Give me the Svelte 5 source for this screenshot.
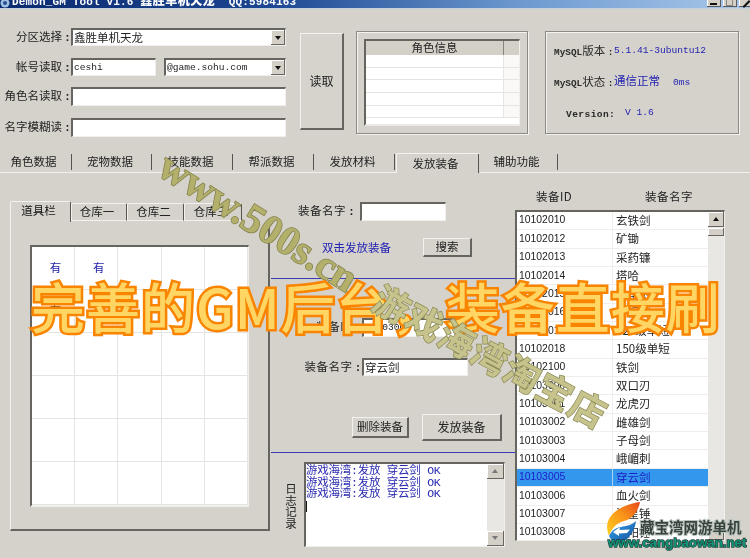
<script lang="ts">
  const tabs = [
    { label: '角色数据', width: 73 },
    { label: '宠物数据', width: 80 },
    { label: '技能数据', width: 81 },
    { label: '帮派数据', width: 81 },
    { label: '发放材料', width: 81 },
    { label: '发放装备', width: 84, active: true },
    { label: '辅助功能', width: 79 },
  ];

  const bagTabs = [
    { label: '道具栏', width: 61, active: true },
    { label: '仓库一', width: 56 },
    { label: '仓库二', width: 57 },
    { label: '仓库三', width: 58 },
  ];

  const cells = Array.from({ length: 30 }, (_, i) => {
    if (i === 0 || i === 1) return { text: '有', dark: false };
    if (i === 5) return { text: '有', dark: true };
    return { text: '', dark: false };
  });

  const items = [
    ['10102010', '玄铁剑'],
    ['10102012', '矿锄'],
    ['10102013', '采药镰'],
    ['10102014', '塔哈'],
    ['10102015', '七星剑'],
    ['10102016', '青铜剑'],
    ['10102017', '120级单短'],
    ['10102018', '150级单短'],
    ['10102100', '铁剑'],
    ['10103000', '双口刃'],
    ['10103001', '龙虎刃'],
    ['10103002', '雌雄剑'],
    ['10103003', '子母剑'],
    ['10103004', '峨嵋刺'],
    ['10103005', '穿云剑'],
    ['10103006', '血火剑'],
    ['10103007', '流星锤'],
    ['10103008', '朝阳锤'],
  ];

  const logLines = [0, 1, 2];
</script>

<div class="window">
  <header class="titlebar">
    <svg class="app-icon" viewBox="0 0 10 10" width="10" height="10">
      <circle cx="5" cy="5" r="4.5" fill="#9fc0e0" />
      <circle cx="5" cy="5" r="2" fill="#24508f" />
    </svg>
    <span class="title">Demon_GM Tool V1.6 <b>鑫胜单机天龙</b> &nbsp;QQ:5984163</span>
    <div class="win-buttons">
      <span class="win-btn"><i class="min"></i></span>
      <span class="win-btn"><i class="max"></i></span>
      <span class="win-btn"><i class="close"></i></span>
    </div>
  </header>

  <section class="top">
    <div class="account">
      <label class="row row-18">
        <span class="label">分区选择<em>:</em></span>
        <div class="sunken select wide"><span class="value cjk">鑫胜单机天龙</span><span class="drop"></span></div>
      </label>
      <div class="row row-18">
        <span class="label">帐号读取<em>:</em></span>
        <div class="pair">
          <div class="sunken user"><span class="value mono">ceshi</span></div>
          <div class="sunken select domain"><span class="value mono">@game.sohu.com</span><span class="drop"></span></div>
        </div>
      </div>
      <label class="row row-19">
        <span class="label">角色名读取<em>:</em></span>
        <div class="sunken wide"></div>
      </label>
      <label class="row row-19">
        <span class="label">名字模糊读<em>:</em></span>
        <div class="sunken wide"></div>
      </label>
    </div>

    <button class="raised read">读取</button>

    <div class="group role-info">
      <div class="role-list">
        <div class="role-head"><span>角色信息</span><span></span></div>
        {#each [0, 1, 2, 3, 4] as r (r)}
          <div class="role-row"><span></span><span></span></div>
        {/each}
      </div>
    </div>

    <div class="group status">
      <p class="line"><span class="key"><u>MySQL</u>版本 <u>:</u></span><span class="val">5.1.41-3ubuntu12</span></p>
      <p class="line"><span class="key"><u>MySQL</u>状态 <u>:</u></span><span class="val">通信正常<span class="ms">0ms</span></span></p>
      <p class="line version"><span class="key"><u>Version:</u></span><span class="val">V 1.6</span></p>
    </div>
  </section>

  <nav class="tabs">
    {#each tabs as tab (tab.label)}
      <div class="tab" class:active={tab.active} style:width="{tab.width}px">{tab.label}</div>
    {/each}
  </nav>

  <main class="page">
    <section class="bag">
      <div class="bag-tabs">
        {#each bagTabs as tab (tab.label)}
          <div class="bag-tab" class:active={tab.active} style:width="{tab.width}px">{tab.label}</div>
        {/each}
      </div>
      <div class="bag-body">
        <div class="slots">
          {#each cells as cell, i (i)}
            <div class="slot" class:dark={cell.dark}>{cell.text}</div>
          {/each}
        </div>
      </div>
    </section>

    <section class="editor">
      <div class="name-search">
        <span class="field-label">装备名字<em>:</em></span>
        <div class="sunken search-input"></div>
      </div>
      <div class="search-row">
        <span class="hint">双击发放装备</span>
        <button class="raised search">搜索</button>
      </div>
      <div class="divider first"></div>
      <div class="edit-row id-row">
        <span class="field-label">装备ID<em>:</em></span>
        <div class="sunken id-input"><span class="value mono">10103005</span></div>
      </div>
      <div class="edit-row name-row">
        <span class="field-label">装备名字<em>:</em></span>
        <div class="sunken name-input"><span class="value cjk">穿云剑</span></div>
      </div>
      <div class="actions">
        <button class="raised del">删除装备</button>
        <button class="raised send">发放装备</button>
      </div>
      <div class="divider second"></div>
      <div class="log">
        <span class="log-label">日志记录</span>
        <div class="sunken log-box">
          <div class="log-text">
            {#each logLines as l (l)}
              <div class="log-line">游戏海湾:发放 穿云剑 OK</div>
            {/each}
            <i class="caret"></i>
          </div>
          <div class="scrollbar">
            <span class="arrow up"></span>
            <span class="arrow down"></span>
          </div>
        </div>
      </div>
    </section>

    <section class="items">
      <div class="items-head"><span>装备ID</span><span>装备名字</span></div>
      <div class="item-list">
        <div class="item-rows">
          {#each items as [id, name] (id)}
            <div class="item" class:selected={id === '10103005'}>
              <span class="item-id">{id}</span>
              <span class="item-name">{name}</span>
            </div>
          {/each}
        </div>
        <div class="scrollbar list-bar">
          <span class="arrow up"></span>
          <span class="thumb"></span>
          <span class="arrow down"></span>
        </div>
      </div>
    </section>
  </main>

  <div class="mark-site">www.500s.cn</div>
  <div class="slogan">完善的GM后台&#65292;装备直接刷</div>
  <div class="mark-shop">游戏海湾淘宝店</div>

  <div class="brand">
    <svg class="brand-logo" viewBox="0 0 36 44" width="36" height="44">
      <defs>
        <linearGradient id="flame" x1="0" y1="1" x2="1" y2="0">
          <stop offset="0" stop-color="#ffd21c" />
          <stop offset="0.55" stop-color="#f9931a" />
          <stop offset="1" stop-color="#e8481a" />
        </linearGradient>
        <linearGradient id="swirl" x1="0" y1="0" x2="1" y2="1">
          <stop offset="0" stop-color="#37a6ea" />
          <stop offset="1" stop-color="#124e9f" />
        </linearGradient>
      </defs>
      <path d="M34 1C25 2 9 7 3 18C0 24 1 30 3 35C5 28 10 22 18 20C26 18 32 11 34 1Z" fill="url(#flame)" />
      <path d="M3 35C6 42 15 44 21 38C25 34 29 28 30 20C26 24 20 25 15 26C9 27 5 30 3 35Z" fill="url(#swirl)" />
      <path d="M7 31L14 26L13.500 29L24 28.500L21 32L13 32.500L13 35Z" fill="#fff" />
    </svg>
    <div class="brand-name">藏宝湾网游单机</div>
    <div class="brand-url">www.cangbaowan.net</div>
  </div>
</div>

<style>
  :global(body) {
    margin: 0;
    background: #d4d0c8;
  }

  .window {
    position: relative;
    width: 750px;
    height: 558px;
    overflow: hidden;
    background: #d5d2cc;
    color: #222;
    font-family: "Noto Sans CJK SC", sans-serif;
    font-size: 11.5px;
    line-height: 1;
    /* the source is a soft jpeg */
    filter: blur(0.3px);
  }

  em {
    font-style: normal;
    font-family: "Liberation Mono", monospace;
    font-weight: 700;
    margin-left: 2px;
  }

  /* title bar, only its lower part is in the shot */
  .titlebar {
    height: 9px;
    display: flex;
    align-items: flex-end;
    overflow: hidden;
    background: linear-gradient(90deg, #0b2a70 0%, #1b4590 35%, #6e9ad0 70%, #a9c8ea 100%);
    border-bottom: 1px solid #c4d2dc;
    box-sizing: border-box;
  }

  .app-icon {
    flex: none;
    margin: 0 2px 0 0;
  }

  .title {
    flex: none;
    height: 14px;
    margin-bottom: -1px;
    color: #fff;
    font-family: "Liberation Mono", "Noto Sans CJK SC", monospace;
    font-size: 11px;
    font-weight: 700;
    line-height: 14px;
    letter-spacing: 0.15px;
    white-space: pre;
  }

  .title b {
    letter-spacing: 0.5px;
    font-size: 12px;
  }

  .win-buttons {
    display: flex;
    gap: 2px;
    margin-left: auto;
    margin-right: -3px;
    margin-bottom: 1px;
  }

  .win-btn {
    position: relative;
    width: 14px;
    height: 12px;
    background: #d4d0c8;
    box-shadow: inset -1px -1px 0 #5b5a56, inset 1px 1px 0 #fff;
  }

  .win-btn i {
    position: absolute;
    display: block;
  }

  .win-btn .min {
    left: 3px;
    bottom: 2px;
    width: 7px;
    height: 2px;
    background: #111;
  }

  .win-btn .max {
    left: 3px;
    bottom: 1px;
    width: 7px;
    height: 7px;
    border: 1px solid #8a8a86;
    box-sizing: border-box;
  }

  .win-btn .close {
    left: 3px;
    bottom: 2px;
    width: 9px;
    height: 2px;
    background: #111;
    transform: rotate(-45deg);
  }

  /* sunken and raised edges */
  .sunken {
    box-sizing: border-box;
    background: #fff;
    border-style: solid;
    border-width: 2px 1px 1px 2px;
    border-color: #66645f #f0efec #f0efec #66645f;
    display: flex;
    align-items: center;
    overflow: hidden;
    min-width: 0;
  }

  .raised {
    box-sizing: border-box;
    padding: 0;
    background: #d6d3cd;
    color: #222;
    font: inherit;
    border-style: solid;
    border-width: 1px 2px 2px 1px;
    border-color: #f2f1ee #66645f #66645f #f2f1ee;
  }

  .value {
    padding-left: 1px;
    white-space: nowrap;
    color: #222;
  }

  .mono {
    font-family: "Liberation Mono", monospace;
    font-size: 9.6px;
  }

  .cjk {
    font-size: 11.5px;
  }

  /* top strip */
  .top {
    height: 144px;
    display: flex;
    align-items: flex-start;
    box-sizing: border-box;
  }

  .account {
    flex: none;
    width: 286px;
    padding-top: 19px;
    display: flex;
    flex-direction: column;
    gap: 12px;
  }

  .row {
    display: flex;
    align-items: center;
  }

  .row-18 {
    height: 18px;
  }

  .row-19 {
    height: 19px;
    margin-top: -1px;
  }

  .row-19:last-child {
    margin-top: 0;
  }

  .label {
    flex: none;
    width: 71px;
    text-align: right;
    white-space: nowrap;
  }

  .wide {
    width: 215px;
    height: 100%;
  }

  .select {
    position: relative;
  }

  .drop {
    position: absolute;
    right: 0;
    top: 0;
    bottom: 0;
    width: 14px;
    background: #d4d0c8;
    box-shadow: inset -1px -1px 0 #66645f, inset 1px 1px 0 #fff;
  }

  .drop::after {
    content: '';
    position: absolute;
    left: 4px;
    top: 6px;
    border: 3px solid transparent;
    border-top: 4px solid #111;
    border-bottom: 0;
  }

  .pair {
    display: flex;
    gap: 8px;
    height: 18px;
  }

  .user {
    width: 85px;
  }

  .domain {
    width: 122px;
  }

  .read {
    flex: none;
    width: 44px;
    height: 97px;
    margin: 24px 0 0 14px;
    font-size: 12px;
  }

  .group {
    box-sizing: border-box;
    flex: none;
    border: 1px solid #8b8a86;
    box-shadow: 1px 1px 0 #f4f3f0, inset 1px 1px 0 #f4f3f0;
  }

  .role-info {
    width: 172px;
    height: 103px;
    margin: 22px 0 0 12px;
    padding: 7px;
  }

  .role-list {
    box-sizing: border-box;
    height: 87px;
    background: #fff;
    border-style: solid;
    border-width: 2px 1px 2px 2px;
    border-color: #66645f #f0efec #eceae6 #66645f;
    overflow: hidden;
  }

  .role-head,
  .role-row {
    display: grid;
    grid-template-columns: 138px 1fr;
  }

  .role-head {
    height: 14px;
    background: #d4d0c8;
    font-size: 11.5px;
    text-align: center;
    line-height: 13px;
  }

  .role-head span:first-child {
    border-right: 1px solid #85847f;
  }

  .role-row {
    height: 12.7px;
    border-bottom: 1px solid #e6e4e0;
    box-sizing: border-box;
  }

  .role-row span:first-child {
    border-right: 1px solid #e6e4e0;
  }

  .role-row span:last-child {
    background: #faf9f7;
  }

  .status {
    width: 194px;
    height: 103px;
    margin: 22px 0 0 17px;
    padding: 13px 0 0 8px;
    font-size: 11.5px;
  }

  .line {
    margin: 0 0 19px;
    height: 12px;
    display: flex;
    align-items: center;
    white-space: nowrap;
  }

  .key {
    width: 60px;
    flex: none;
    color: #2b2a28;
  }

  .key u {
    text-decoration: none;
    font-family: "Liberation Mono", monospace;
    font-size: 9.4px;
    font-weight: 700;
  }

  .val {
    color: #2424b0;
    font-family: "Liberation Mono", "Noto Sans CJK SC", monospace;
    font-size: 9.6px;
  }

  .line:nth-child(2) .val {
    font-size: 11.5px;
  }

  .ms {
    margin-left: 13px;
    font-size: 9.6px;
  }

  .version {
    padding-left: 12px;
  }

  .version .key {
    width: 59px;
  }

  .version .key u {
    letter-spacing: 0.4px;
    font-size: 9.6px;
  }

  /* main tabs */
  .tabs {
    height: 19px;
    display: flex;
    align-items: flex-end;
    border-bottom: 1px solid #f2f1ee;
    box-sizing: content-box;
  }

  .tab {
    box-sizing: border-box;
    flex: none;
    height: 16px;
    margin-bottom: 2px;
    display: flex;
    align-items: center;
    justify-content: center;
    padding-right: 6px;
    position: relative;
  }

  .tab::after {
    content: '';
    position: absolute;
    right: 1px;
    top: 0;
    bottom: 0;
    width: 1.5px;
    background: #55544f;
  }

  .tab.active {
    height: 20px;
    margin-bottom: -1px;
    background: #d5d2cc;
    border-top: 1px solid #f2f1ee;
    border-left: 1px solid #f2f1ee;
    border-radius: 2px 2px 0 0;
    z-index: 1;
  }

  /* tab page */
  .page {
    display: grid;
    grid-template-columns: 260px 245px 210px;
    padding-left: 10px;
  }

  .bag {
    padding-top: 28px;
  }

  .bag-tabs {
    height: 20px;
    display: flex;
    align-items: flex-end;
  }

  .bag-tab {
    box-sizing: border-box;
    flex: none;
    height: 18px;
    display: flex;
    align-items: center;
    justify-content: center;
    padding-right: 4px;
    border-top: 1px solid #f2f1ee;
    border-left: 1px solid #f2f1ee;
    border-bottom: 1px solid #f2f1ee;
    border-right: 1.5px solid #55544f;
    border-radius: 2px 2px 0 0;
  }

  .bag-tab.active {
    height: 21px;
    border-bottom: 0;
    padding-bottom: 3px;
    color: #111;
    margin-bottom: -1px;
    position: relative;
    background: #d5d2cc;
  }

  .bag-body {
    box-sizing: border-box;
    height: 310px;
    padding: 24px 19px;
    border-style: solid;
    border-width: 0 2px 2px 1px;
    border-color: #66645f #66645f #66645f #f2f1ee;
  }

  .slots {
    box-sizing: border-box;
    width: 219px;
    height: 262px;
    display: grid;
    grid-template-columns: repeat(5, 1fr);
    grid-template-rows: repeat(6, 1fr);
    background: #fff;
    border-style: solid;
    border-width: 2px 1px 2px 2px;
    border-color: #66645f #f0efec #f0efec #66645f;
  }

  .slot {
    display: flex;
    align-items: center;
    justify-content: center;
    padding-left: 5px;
    color: #2222aa;
    border-right: 1px solid #e4e4e2;
    border-bottom: 1px solid #e4e4e2;
  }

  .slot.dark {
    color: #222;
  }

  .editor {
    padding-top: 29px;
    display: flex;
    flex-direction: column;
  }

  .name-search {
    display: flex;
    align-items: center;
    height: 19px;
    gap: 5px;
    padding-left: 28px;
  }

  .field-label {
    flex: none;
    white-space: nowrap;
    letter-spacing: 0.5px;
  }

  .search-input {
    width: 86px;
    height: 100%;
  }

  .search-row {
    height: 19px;
    margin-top: 17px;
    padding-left: 52px;
    display: flex;
    align-items: center;
  }

  .hint {
    color: #2222b4;
    font-size: 11.5px;
    white-space: nowrap;
  }

  .search {
    width: 49px;
    height: 19px;
    margin-left: 32px;
    font-size: 11.5px;
  }

  .divider {
    height: 1px;
    flex: none;
    margin-left: 1px;
    background: #3a3ab4;
  }

  .divider.first {
    margin-top: 21px;
  }

  .edit-row {
    display: flex;
    justify-content: flex-end;
    align-items: center;
  }

  .id-row {
    height: 19px;
    margin-top: 39px;
    padding-right: 52px;
  }

  .name-row {
    height: 18px;
    margin-top: 21px;
    padding-right: 47px;
  }

  .id-input {
    width: 101px;
    height: 100%;
  }

  .name-input {
    width: 106px;
    height: 100%;
  }

  .actions {
    height: 27px;
    margin-top: 38px;
    padding-left: 82px;
    display: flex;
    align-items: center;
    gap: 13px;
  }

  .del {
    width: 57px;
    height: 21px;
    font-size: 11.5px;
  }

  .send {
    width: 80px;
    height: 27px;
    font-size: 12px;
  }

  .divider.second {
    margin-top: 11px;
  }

  .log {
    margin-top: 9px;
    height: 85px;
    display: flex;
    align-items: center;
    padding-left: 13px;
  }

  .log-label {
    writing-mode: vertical-rl;
    font-size: 11.5px;
    width: 13px;
    margin-top: 2px;
  }

  .log-box {
    width: 201px;
    height: 85px;
    margin-left: 8px;
    align-items: stretch;
  }

  .log-text {
    flex: 1;
    padding: 1px 0 0 0;
    color: #2a2ab0;
    font-family: "Liberation Mono", "Noto Sans CJK SC", monospace;
    font-size: 11.5px;
    letter-spacing: -0.25px;
    white-space: nowrap;
    overflow: hidden;
  }

  .log-line {
    height: 11.5px;
    line-height: 11.5px;
  }

  .caret {
    display: block;
    width: 1px;
    height: 11px;
    margin-top: 1px;
    background: #111;
  }

  .scrollbar {
    flex: none;
    width: 17px;
    display: flex;
    flex-direction: column;
    justify-content: space-between;
    background: #e9e7e3;
  }

  .arrow {
    display: block;
    position: relative;
    height: 15px;
    background: #d4d0c8;
    box-shadow: inset -1px -1px 0 #66645f, inset 1px 1px 0 #fff;
  }

  .arrow::after {
    content: '';
    position: absolute;
    left: 5px;
    top: 5px;
    border: 3px solid transparent;
    border-bottom: 4px solid #111;
    border-top: 0;
  }

  .arrow.down::after {
    border-top: 4px solid #777;
    border-bottom: 0;
  }

  .log-box .arrow.up::after {
    border-bottom-color: #777;
  }

  .items {
    padding-top: 18px;
  }

  .items-head {
    height: 19px;
    display: flex;
    padding-left: 21px;
    letter-spacing: 0.5px;
  }

  .items-head span:first-child {
    width: 109px;
  }

  .item-list {
    box-sizing: border-box;
    width: 210px;
    height: 331px;
    display: flex;
    background: #fff;
    border-style: solid;
    border-width: 2px 1px 1px 2px;
    border-color: #66645f #f0efec #f0efec #66645f;
    overflow: hidden;
  }

  .item-rows {
    flex: 1;
    min-width: 0;
  }

  .item {
    box-sizing: border-box;
    height: 18.35px;
    display: grid;
    grid-template-columns: 95px 1fr;
    align-items: center;
    border-bottom: 1px solid #efeeec;
  }

  .item-id {
    padding-left: 2px;
    font-family: "Liberation Sans", sans-serif;
    font-size: 10.4px;
    color: #222;
  }

  .item-name {
    height: 100%;
    display: flex;
    align-items: center;
    padding-left: 3px;
    border-left: 1px solid #efeeec;
    white-space: nowrap;
  }

  .item.selected {
    background: #3397ee;
  }

  .item.selected span {
    color: #1c1cc4;
    border-color: #a9d2f4;
  }

  .list-bar {
    width: 16px;
    position: relative;
  }

  .list-bar .thumb {
    position: absolute;
    left: 0;
    right: 0;
    top: 16px;
    height: 8px;
    background: #d4d0c8;
    box-shadow: inset -1px -1px 0 #66645f, inset 1px 1px 0 #fff;
  }

  /* overlays stamped on the picture */
  .slogan {
    position: absolute;
    left: 31px;
    top: 270px;
    font-size: 54px;
    line-height: 72px;
    font-weight: 500;
    white-space: nowrap;
    color: #ffd564;
    -webkit-text-stroke: 5px #f98400;
    paint-order: stroke fill;
    letter-spacing: 1px;
  }

  .mark-site,
  .mark-shop {
    position: absolute;
    white-space: nowrap;
    transform-origin: left center;
    paint-order: stroke fill;
  }

  .mark-site {
    left: 163px;
    top: 140px;
    transform: rotate(32deg);
    font-family: "Liberation Serif", serif;
    font-size: 41px;
    font-weight: 700;
    line-height: 44px;
    color: #b3b06c;
    -webkit-text-stroke: 1.5px #82804a;
  }

  .mark-shop {
    left: 377px;
    top: 272px;
    transform: rotate(28deg);
    font-size: 36px;
    font-weight: 700;
    line-height: 44px;
    letter-spacing: 1px;
    color: #c6c48c;
    -webkit-text-stroke: 1.5px #8e8c58;
  }

  .brand {
    position: absolute;
    left: 606px;
    top: 501px;
    width: 140px;
    height: 50px;
  }

  .brand-logo {
    position: absolute;
    left: 0;
    top: 0;
  }

  .brand-name {
    position: absolute;
    left: 34px;
    top: 18px;
    font-size: 14.5px;
    line-height: 16px;
    font-weight: 700;
    white-space: nowrap;
    color: #38433d;
    -webkit-text-stroke: 2px #b9c4bd;
    paint-order: stroke fill;
  }

  .brand-url {
    position: absolute;
    left: 2px;
    top: 35px;
    font-family: "Liberation Sans", sans-serif;
    font-size: 13.3px;
    line-height: 14px;
    font-weight: 700;
    white-space: nowrap;
    color: #0f9478;
    -webkit-text-stroke: 1.5px #24423a;
    paint-order: stroke fill;
  }
</style>
